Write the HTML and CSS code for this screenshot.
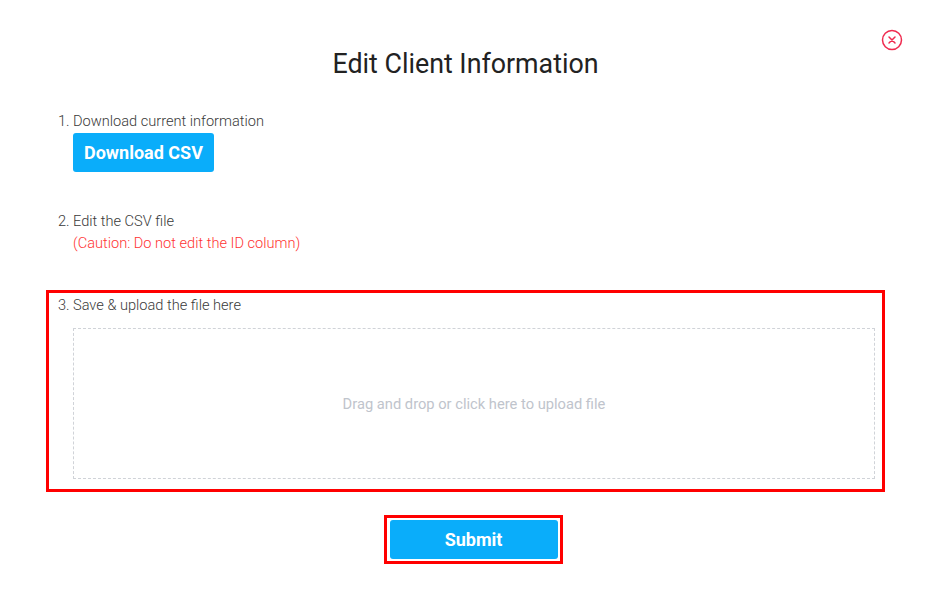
FILE: index.html
```html
<!DOCTYPE html>
<html lang="en">
<head>
<meta charset="utf-8">
<title>Edit Client Information</title>
<link rel="stylesheet" href="styles.css">
</head>
<body>
<div class="modal">
  <button class="close" aria-label="Close">
    <svg width="22" height="22" viewBox="0 0 22 22" fill="none" stroke="#ef2b4f" stroke-width="1.5" stroke-linecap="round">
      <circle cx="11" cy="11" r="9.5"/>
      <path d="M8 8 L14 14 M14 8 L8 14"/>
    </svg>
  </button>
  <h1 class="title">Edit Client Information</h1>

  <div class="step step-first">
    <span class="num">1.</span>
    <div class="body">
      <div class="label">Download current information</div>
      <button class="btn btn-download">Download CSV</button>
    </div>
  </div>

  <div class="step step-second">
    <span class="num">2.</span>
    <div class="body">
      <div class="label">Edit the CSV file</div>
      <div class="caution">(Caution: Do not edit the ID column)</div>
    </div>
  </div>

  <div class="step step-upload">
    <span class="num">3.</span>
    <div class="body">
      <div class="label">Save &amp; upload the file here</div>
      <div class="dropzone">Drag and drop or click here to upload file</div>
    </div>
  </div>

  <div class="footer">
    <div class="submit-wrap">
      <button class="btn btn-submit">Submit</button>
    </div>
  </div>
</div>
</body>
</html>
```
FILE: styles.css
```css
html, body {
  margin: 0;
  padding: 0;
  background: #ffffff;
}
body {
  font-family: Roboto, "Liberation Sans", Arial, sans-serif;
  color: #333;
}
.modal {
  position: relative;
  margin: 0 50px 0 46px;
  padding-top: 48px;
}
.close {
  position: absolute;
  top: 29px;
  right: -18px;
  width: 22px;
  height: 22px;
  padding: 0;
  border: 0;
  background: none;
  cursor: pointer;
}
.close svg { display: block; }
.title {
  margin: 0;
  text-align: center;
  font-size: 26.8px;
  font-weight: 400;
  line-height: 33px;
  color: #222;
}
.step {
  display: grid;
  grid-template-columns: 15px 1fr;
  font-size: 14.6px;
  line-height: 20px;
  font-weight: 300;
  color: #3a3a3a;
  padding-left: 12px;
}
.num { white-space: nowrap; }
.step-first { margin-top: 30px; }
.step-second { margin-top: 39px; }
.label { color: #3a3a3a; }
.btn {
  border: 0;
  border-radius: 3px;
  background: #0aadfa;
  color: #fff;
  font-family: Roboto, "Liberation Sans", Arial, sans-serif;
  font-weight: 700;
  font-size: 18px;
  cursor: pointer;
}
.btn-download {
  display: block;
  margin-top: 2px;
  width: 141px;
  height: 39px;
  padding: 0;
}
.caution {
  margin-top: 2px;
  color: #ff3333;
}
.step-upload {
  margin-top: 37px;
  border: 3px solid #ff0000;
  padding: 2px 7px 10px 9px;
}
.dropzone {
  margin-top: 13px;
  height: 149px;
  border: 1px dashed #d0d3d8;
  display: flex;
  align-items: center;
  justify-content: center;
  color: #c0c4cc;
  font-weight: 400;
  font-size: 14.7px;
}
.footer {
  display: flex;
  justify-content: center;
  padding-left: 15px;
  margin-top: 23px;
}
.submit-wrap {
  border: 3px solid #ff0000;
  padding: 2px 2px 2px 3px;
}
.btn-submit {
  display: block;
  width: 168px;
  height: 39px;
  padding: 0;
}
```
